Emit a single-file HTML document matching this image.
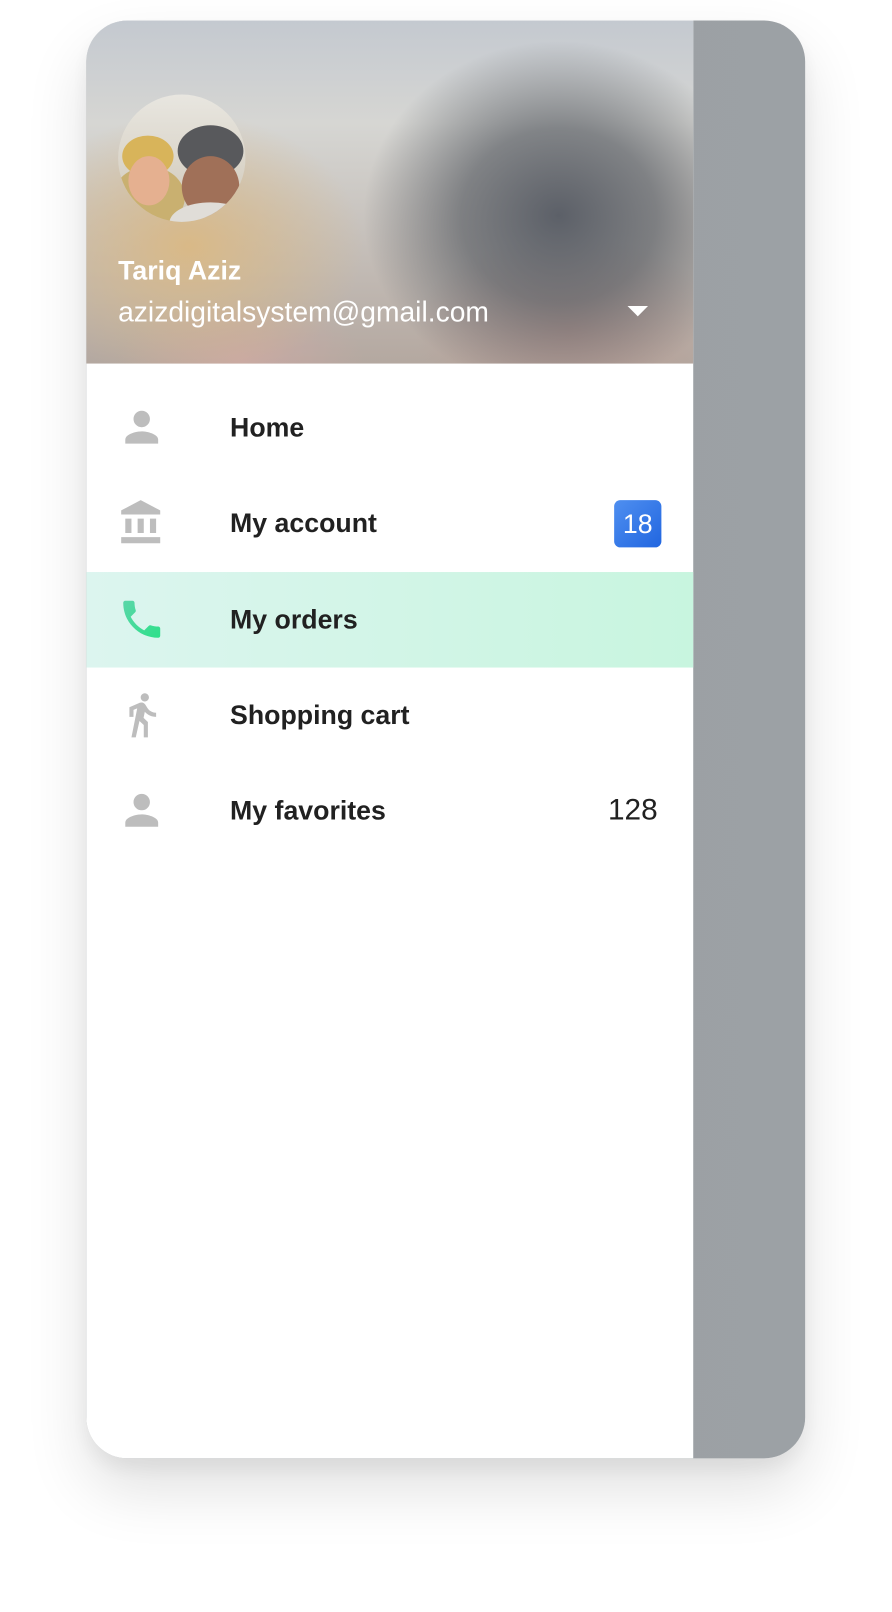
<!DOCTYPE html>
<html><head><meta charset="utf-8"><style>
body{margin:0;width:892px;height:1612px;background:#fff;font-family:"Liberation Sans",Roboto,sans-serif;position:relative;overflow:hidden}
.wrap{position:absolute;left:0;top:0;width:868px;height:1570px;transform:scale(1.027);transform-origin:0 0}
.card{position:absolute;left:84px;top:20px;width:700px;height:1400px;border-radius:40px;overflow:hidden;background:linear-gradient(90deg,#9a9ea2,#9ca1a5);box-shadow:0 30px 60px rgba(0,0,0,.12),0 10px 20px rgba(0,0,0,.06)}
.drawer{position:absolute;left:0;top:0;width:591px;height:1400px;background:#fff}
.hdr{position:absolute;left:0;top:0;width:591px;height:334px;overflow:hidden;
background:radial-gradient(ellipse 190px 170px at 460px 190px,#5c6068 0%,rgba(94,98,104,.7) 50%,rgba(94,98,104,0) 100%),
radial-gradient(ellipse 150px 90px at 470px 300px,#b89a92 0%,rgba(183,154,146,0) 100%),
radial-gradient(ellipse 170px 130px at 100px 220px,#d9b987 0%,rgba(217,185,135,0) 100%),
radial-gradient(ellipse 120px 60px at 150px 330px,#c9a9a4 0%,rgba(201,169,164,0) 100%),
linear-gradient(180deg,#c4c9d0 0%,#d6d6d3 30%,#b4a8a0 100%)}
.av{position:absolute;left:31px;top:72px;width:124px;height:124px;border-radius:50%;overflow:hidden;background:linear-gradient(180deg,#e8e6e0,#d0c8b8)}
.av i{position:absolute;border-radius:50%;display:block}
.name{position:absolute;left:31px;top:228px;color:#fff;font-size:26px;font-weight:bold}
.mail{position:absolute;left:31px;top:268px;color:#fff;font-size:27.5px}
.tri{position:absolute;left:527px;top:278px;width:0;height:0;border-left:10px solid transparent;border-right:10px solid transparent;border-top:10px solid #fff}
.row{position:absolute;left:0;width:591px;height:93px}
.row .ic{position:absolute;left:30px;top:22px;width:48px;height:48px}
.row .t{position:absolute;left:140px;top:31px;font-size:26px;color:#212121;font-weight:bold}
.sel{background:linear-gradient(90deg,#dcf5ef,#c8f5df)}
.badge{position:absolute;left:514px;top:24px;width:46px;height:46px;border-radius:6px;background:linear-gradient(135deg,#4f8ff0,#2166e0);color:#fff;font-size:26px;text-align:center;line-height:46px}
.cnt{position:absolute;left:508px;top:30px;font-size:29px;color:#212121}
</style></head><body>
<div class="wrap">
<div class="card">
<div class="drawer">
<div class="hdr"><div class="av">
<i style="left:-5px;top:70px;width:70px;height:60px;background:#c9b070"></i>
<i style="left:4px;top:40px;width:50px;height:40px;background:#d8b45a"></i>
<i style="left:10px;top:60px;width:40px;height:48px;background:#e5b090"></i>
<i style="left:58px;top:30px;width:64px;height:50px;background:#58595c"></i>
<i style="left:62px;top:60px;width:56px;height:60px;background:#a07058"></i>
<i style="left:50px;top:105px;width:80px;height:40px;background:#e0ddd8"></i>
</div>
<div class="name">Tariq Aziz</div>
<div class="mail">azizdigitalsystem@gmail.com</div>
<div class="tri"></div></div>

<div class="row" style="top:350px"><svg class="ic" viewBox="0 0 24 24"><path fill="#bdbdbd" d="M12 12c2.21 0 4-1.79 4-4s-1.79-4-4-4-4 1.79-4 4 1.79 4 4 4zm0 2c-2.67 0-8 1.34-8 4v2h16v-2c0-2.66-5.330-4-8-4z"/></svg><div class="t">Home</div></div>

<div class="row" style="top:443px"><svg class="ic" viewBox="0 0 24 24"><path fill="#bdbdbd" d="M4 10v7h3v-7H4zm6 0v7h3v-7h-3zM2 22h19v-3H2v3zm14-12v7h3v-7h-3zm-4.5-9L2 6v2h19V6l-9.5-5z"/></svg><div class="t">My account</div><div class="badge">18</div></div>

<div class="row sel" style="top:537px"><svg class="ic" viewBox="0 0 24 24"><defs><linearGradient id="g" x1="0" y1="0" x2="1" y2="1"><stop offset="0" stop-color="#5ad6a8"/><stop offset="1" stop-color="#2ee08a"/></linearGradient></defs><path fill="url(#g)" d="M6.62 10.79c1.44 2.83 3.76 5.14 6.59 6.59l2.2-2.2c.27-.27.67-.36 1.02-.24 1.12.37 2.33.57 3.57.57.55 0 1 .45 1 1V20c0 .55-.45 1-1 1-9.39 0-17-7.61-17-17 0-.55.45-1 1-1h3.5c.55 0 1 .45 1 1 0 1.25.2 2.45.57 3.57.11.35.03.74-.25 1.020l-2.2 2.2z"/></svg><div class="t">My orders</div></div>

<div class="row" style="top:630px"><svg class="ic" viewBox="0 0 24 24"><path fill="#bdbdbd" d="M13.5 5.5c1.1 0 2-.9 2-2s-.9-2-2-2-2 .9-2 2 .9 2 2 2zM9.8 8.9L7 23h2.1l1.8-8 2.1 2v6h2v-7.5l-2.1-2 .6-3C14.8 12 16.8 13 19 13v-2c-1.9 0-3.5-1-4.3-2.4l-1-1.6c-.4-.6-1-1-1.7-1-.3 0-.5.1-.8.1L6 8.3V13h2V9.6l1.8-.7"/></svg><div class="t">Shopping cart</div></div>

<div class="row" style="top:723px"><svg class="ic" viewBox="0 0 24 24"><path fill="#bdbdbd" d="M12 12c2.21 0 4-1.79 4-4s-1.79-4-4-4-4 1.79-4 4 1.79 4 4 4zm0 2c-2.67 0-8 1.34-8 4v2h16v-2c0-2.66-5.33-4-8-4z"/></svg><div class="t">My favorites</div><div class="cnt">128</div></div>
</div>
</div>
</div>
</body></html>
